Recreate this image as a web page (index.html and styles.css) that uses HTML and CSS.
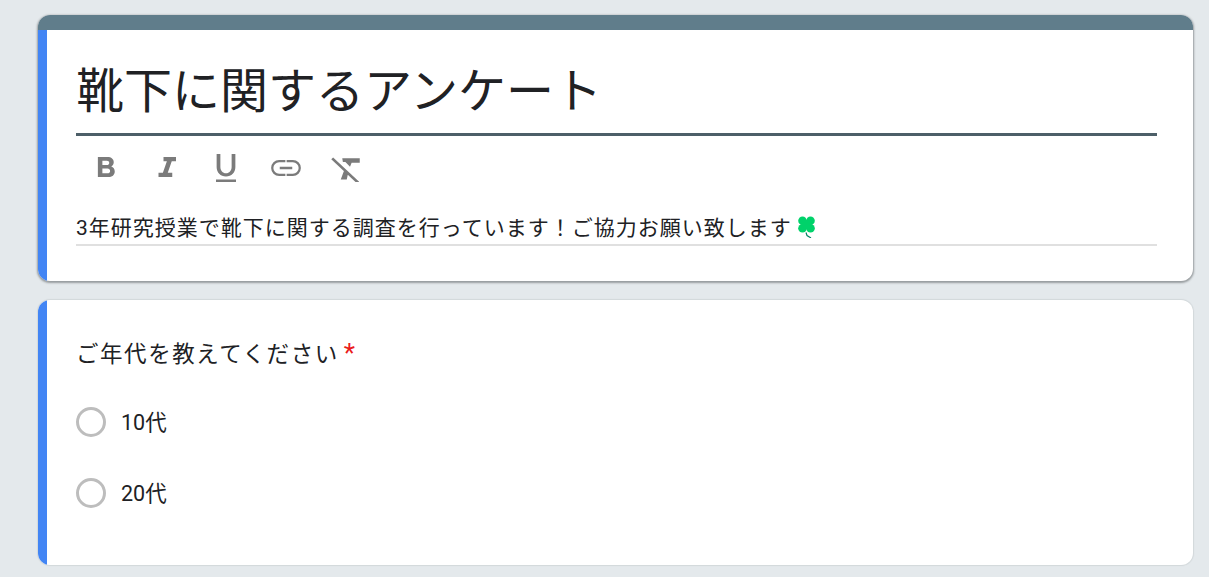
FILE: index.html
```html
<!DOCTYPE html>
<html lang="ja">
<head>
<meta charset="utf-8">
<title>靴下に関するアンケート</title>
<link rel="stylesheet" href="styles.css">
</head>
<body>
<main class="form">
  <section class="card card-head">
    <div class="accent-top"></div>
    <div class="card-body head-body">
      <h1 class="title">靴下に関するアンケート</h1>
      <div class="toolbar">
        <svg class="tool" viewBox="0 0 24 24"><path d="M5.500 4h7.700c3 0 5 1.600 5 4.200 0 1.500-.8 2.800-2 3.400 1.700.6 2.800 2 2.800 3.900 0 2.800-2.100 4.500-5.200 4.500H5.500zm3.600 3v3.400h3.600c1.100 0 1.900-.7 1.900-1.700S13.800 7 12.700 7zm0 6.200V17h4.100c1.200 0 2.100-.8 2.100-1.900s-.9-1.900-2.100-1.900z" fill-rule="evenodd"/></svg>
        <svg class="tool" viewBox="0 0 24 24"><path d="M10 4h10v3.400h-3.400l-3.200 9.200H17V20H6v-3.400h3.500l3.200-9.200H10z"/></svg>
        <svg class="tool" viewBox="0 0 24 24"><path d="M4.500 1.500h3V12c0 2.900 1.900 5 4.500 5s4.500-2.100 4.500-5V1.500h3V12c0 4.500-3.100 7.600-7.500 7.600S4.500 16.500 4.500 12zM4 22h16v3H4z"/></svg>
        <svg class="tool" viewBox="0 0 24 24"><path d="M11.500 6.400h-5a6.400 6.400 0 0 0 0 12.800h5v-1.800h-5a4.600 4.600 0 0 1 0-9.200h5zm1 0h5a6.400 6.400 0 0 1 0 12.800h-5v-1.800h5a4.600 4.600 0 0 0 0-9.200h-5zM7 11.800h10v2H7z"/></svg>
        <svg class="tool" viewBox="0 0 24 24"><path d="M9 5h14v3.500h-6.500l-1.300 3.200-3.700-3.700H9.500zM10.600 14.300l3 3-1 4.700H7.800zM1.700 4.300l20.800 19.500-1.500 1.500L.2 5.800z"/></svg>
      </div>
      <p class="desc"><span>3年研究授業で靴下に関する調査を行っています！ご協力お願い致します</span><svg class="clover" viewBox="0 0 17 22"><g class="leaf"><circle cx="4.500" cy="4.800" r="4.300"/><circle cx="12.500" cy="4.800" r="4.300"/><circle cx="4.500" cy="12.300" r="4.300"/><circle cx="12.500" cy="12.300" r="4.300"/><rect x="4" y="4" width="9" height="9"/></g><path class="stem" d="M8 16.500l1 3 4 2.500"/></svg></p>
    </div>
  </section>
  <section class="card card-question">
    <div class="card-body question-body">
      <h2 class="question">ご年代を教えてください<span class="required">*</span></h2>
      <ul class="options">
        <li class="option"><span class="radio"></span><span class="label">10代</span></li>
        <li class="option"><span class="radio"></span><span class="label">20代</span></li>
      </ul>
    </div>
  </section>
</main>
</body>
</html>
```
FILE: styles.css
```css
* { box-sizing: border-box; }
html, body { margin: 0; height: 100%; overflow: hidden; }
body {
  background: #e4e9ec;
  color: #202124;
  font-family: Roboto, "Noto Sans CJK JP", sans-serif;
}
.form {
  display: flex;
  flex-direction: column;
  gap: 19px;
  margin-left: 38px;
  width: 1155px;
  padding-top: 15px;
}
.card {
  background: #fff;
  border-radius: 12px;
  overflow: hidden;
}
.card-head { height: 266px; box-shadow: 0 1px 2px 1px rgba(60, 64, 67, .45); }
.card-question { height: 265px; box-shadow: 0 0 1px 1px rgba(60, 64, 67, .1); }
.accent-top { height: 15px; background: #607d8b; }
.card-body {
  border-left: 9px solid #4285f4;
  padding: 0 36px 0 29px;
}
.head-body { height: 251px; }
.question-body { height: 265px; }
.title {
  margin: 0;
  height: 106px;
  padding-top: 30px;
  border-bottom: 3px solid #4d5f68;
  font-size: 48px;
  line-height: 64px;
  font-weight: 400;
  white-space: nowrap;
}
.toolbar {
  display: flex;
  gap: 30px;
  padding: 16px 0 0 15px;
  height: 80px;
  align-items: flex-start;
}
.tool { width: 30px; height: 30px; fill: #7b7b7b; flex: none; }
.desc {
  margin: 0;
  height: 30px;
  border-bottom: 2px solid #e0e0e0;
  display: flex;
  align-items: flex-start;
  font-size: 21px;
  letter-spacing: 1px;
  line-height: 24px;
  white-space: nowrap;
}
.clover { width: 17px; height: 22px; margin: 0 0 0 6px; flex: none; }
.leaf { fill: #00d26a; }
.stem { fill: none; stroke: #008463; stroke-width: 1.2; }
.question {
  margin: 0;
  padding-top: 37px;
  font-size: 22.5px;
  letter-spacing: 1.55px;
  line-height: 34px;
  font-weight: 400;
  white-space: nowrap;
}
.required { color: #ea1b1b; margin-left: 5px; font-size: 26px; line-height: 26px; }
.options {
  list-style: none;
  margin: 36px 0 0;
  padding: 0;
  display: flex;
  flex-direction: column;
  gap: 41px;
}
.option { display: flex; align-items: center; height: 30px; }
.radio {
  width: 30px;
  height: 30px;
  border: 3px solid #bdbdbd;
  border-radius: 50%;
  flex: none;
}
.label { margin-left: 15px; padding-top: 2px; font-size: 21.5px; line-height: 30px; }
```
